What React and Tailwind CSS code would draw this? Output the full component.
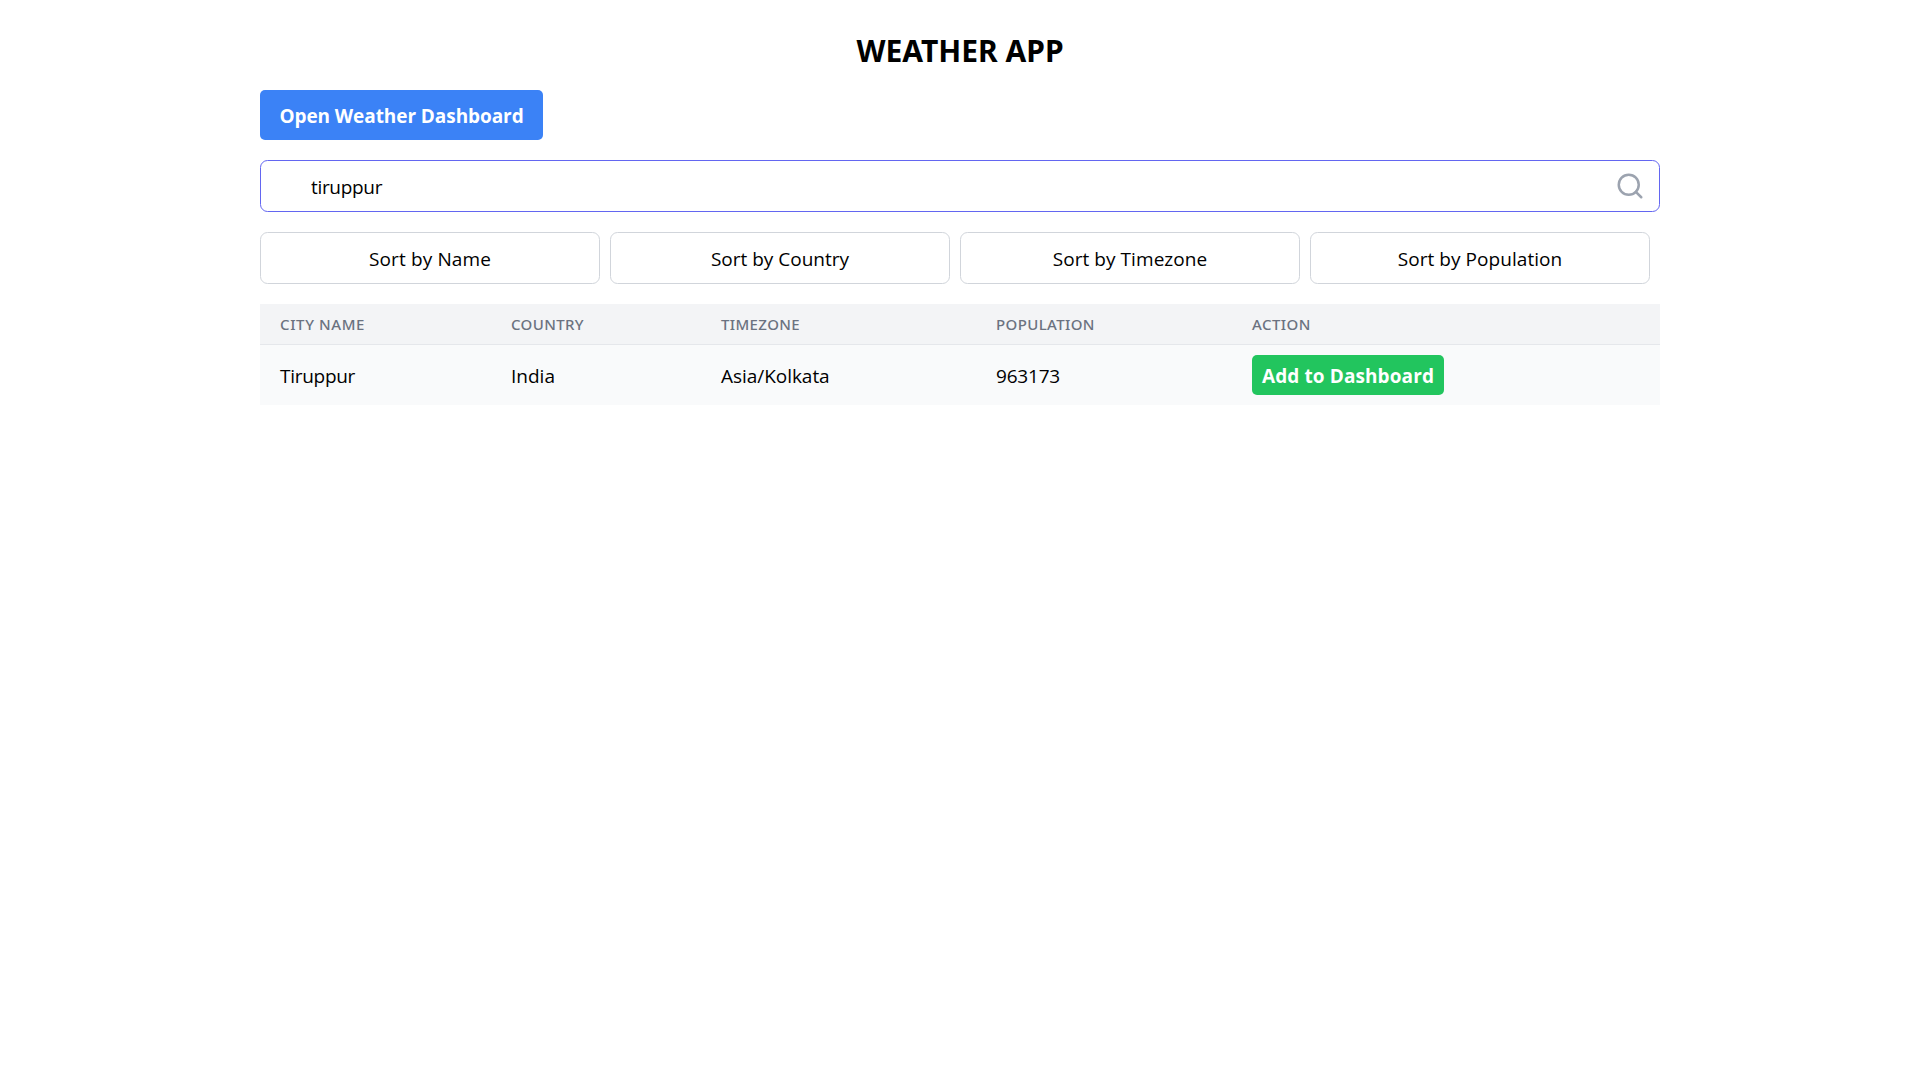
import { Search } from "lucide-react";

const sortOptions = [
  { label: "Sort by Name", tracking: "tracking-[0.12px]" },
  { label: "Sort by Country", tracking: "tracking-[0px]" },
  { label: "Sort by Timezone", tracking: "tracking-[0.06px]" },
  { label: "Sort by Population", tracking: "tracking-[0.06px]" },
];

const columns = [
  { label: "City Name", width: "w-[231px]", tracking: "tracking-[0.62px]" },
  { label: "Country", width: "w-[210px]", tracking: "tracking-[0.37px]" },
  { label: "Timezone", width: "w-[275px]", tracking: "tracking-[0.37px]" },
  { label: "Population", width: "w-[256px]", tracking: "tracking-[0.38px]" },
  { label: "Action", width: "w-[428px]", tracking: "tracking-[0.42px]" },
];

const cities = [
  { name: "Tiruppur", country: "India", timezone: "Asia/Kolkata", population: 963173 },
];

function SearchField() {
  return (
    <div className="relative mb-5">
      <input
        type="text"
        defaultValue="tiruppur"
        className="block h-[52px] w-full rounded-[7.5px] border border-[#6366f1] pt-px pr-[50px] pl-[50px] tracking-[-0.32px] outline-none"
      />
      <Search className="absolute top-[11px] right-[15px] size-[30px] text-[#9ca3af]" strokeWidth={2} />
    </div>
  );
}

function CityTable() {
  return (
    <table className="w-full table-fixed border-separate border-spacing-0 text-left">
      <thead>
        <tr className="h-[41px] bg-[#f3f4f6] font-['Noto_Sans',sans-serif] text-[15px] leading-5 text-[#6b7280] uppercase">
          {columns.map((column) => (
            <th
              key={column.label}
              className={`border-b border-[#e5e7eb] px-5 font-medium ${column.width} ${column.tracking}`}
            >
              {column.label}
            </th>
          ))}
        </tr>
      </thead>
      <tbody>
        {cities.map((city) => (
          <tr key={city.name} className="h-[60px] bg-[#f9fafb]">
            <td className="px-5 pt-[2px] tracking-[-0.28px]">{city.name}</td>
            <td className="px-5 pt-[2px]">{city.country}</td>
            <td className="px-5 pt-[2px] tracking-[-0.04px]">{city.timezone}</td>
            <td className="px-5 pt-[2px] tracking-[-0.2px]">{city.population}</td>
            <td className="px-5">
              <button className="block h-10 w-48 rounded-[5px] bg-[#22c55e] pt-[2px] font-bold tracking-[0.1px] whitespace-nowrap text-white">
                Add to Dashboard
              </button>
            </td>
          </tr>
        ))}
      </tbody>
    </table>
  );
}

export default function App() {
  return (
    <div className="min-h-screen bg-white font-['Open_Sans','Noto_Sans',sans-serif] text-[19px] leading-[30px] text-black">
      <main className="mx-auto w-[1400px] pt-[31px]">
        <h1 className="mb-[19px] text-center font-['Noto_Sans',sans-serif] text-[30px] leading-10 font-bold">
          WEATHER APP
        </h1>
        <button className="mb-5 block h-[50px] w-[283px] rounded-[5px] bg-[#3b82f6] pt-[2px] font-bold tracking-[-0.07px] whitespace-nowrap text-white">
          Open Weather Dashboard
        </button>
        <SearchField />
        <div className="mb-5 flex">
          {sortOptions.map((option) => (
            <button
              key={option.label}
              className={`mr-[10px] h-[52px] flex-1 rounded-[7.5px] border border-[#d1d5db] pt-[2px] ${option.tracking}`}
            >
              {option.label}
            </button>
          ))}
        </div>
        <CityTable />
      </main>
    </div>
  );
}
